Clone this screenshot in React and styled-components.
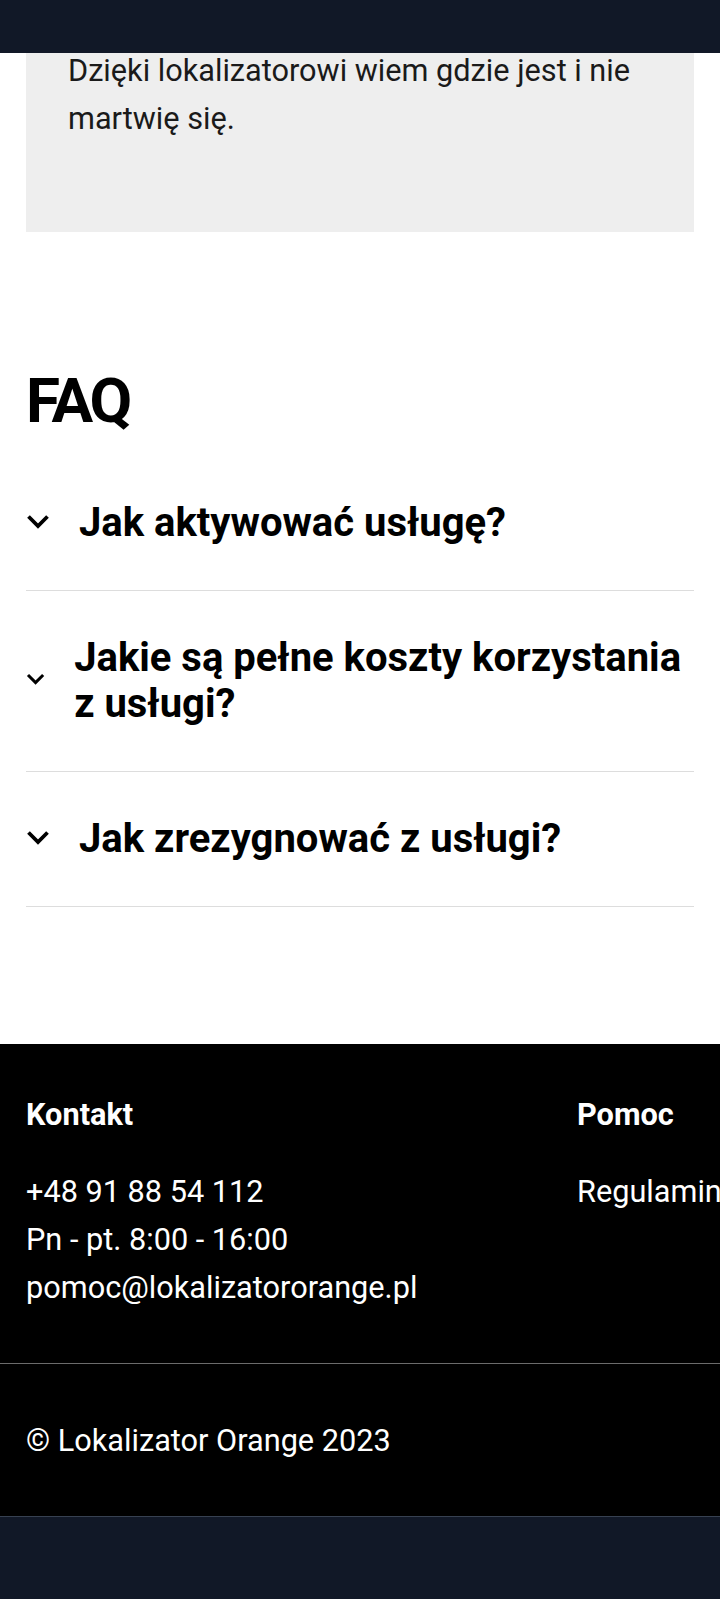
import styled, {createGlobalStyle} from 'styled-components'

const GlobalStyle = createGlobalStyle`
    html, body {
        margin: 0;
        padding: 0;
        background: #ffffff;
        font-family: Roboto, "Noto Sans", "Liberation Sans", sans-serif;
        color: #111111;
    }
    * {
        box-sizing: border-box;
    }
`

const TopBar = styled.div`
    position: fixed;
    top: 0;
    left: 0;
    right: 0;
    height: 53px;
    background: #111827;
    z-index: 10;
`

const Main = styled.main`
    padding: 0 26px;
`

const Testimonial = styled.section`
    background: #eeeeee;
    padding: 47px 42px 89px;
    font-size: 30.7px;
    line-height: 48px;
    color: #1a1a1a;
`

const Faq = styled.section`
    padding: 132px 0 137px;
`

const FaqTitle = styled.h2`
    margin: 0 0 18px;
    font-size: 62px;
    font-weight: 700;
    line-height: 1.2;
    letter-spacing: -3px;
    color: #000000;
`

const FaqItem = styled.div`
    display: flex;
    align-items: center;
    gap: 29px;
    padding: 44px 0;
    border-bottom: 1px solid #dddddd;
`

const ChevronBox = styled.span`
    display: block;
    width: 24px;
    min-width: 0;
    flex: 0 1 auto;
    margin-top: -4px;
    color: #000000;

    svg {
        display: block;
        width: 100%;
        height: auto;
    }
`

const Question = styled.h3`
    margin: 0;
    flex: 0 1 auto;
    font-size: 40px;
    font-weight: 700;
    line-height: 46px;
    color: #000000;
`

const Footer = styled.footer`
    background: #000000;
    color: #ffffff;
    overflow: hidden;
`

const FooterColumns = styled.div`
    display: grid;
    grid-template-columns: 551px max-content;
    padding: 53px 26px 51px;
    border-bottom: 1px solid #6b6b6b;
`

const FooterHeading = styled.h4`
    margin: 0 0 35px;
    font-size: 30.7px;
    font-weight: 700;
    line-height: 36px;
`

const FooterLine = styled.div`
    font-size: 30.7px;
    line-height: 48px;
    white-space: nowrap;
`

const Copyright = styled.div`
    padding: 53px 26px 51px;
    font-size: 30.7px;
    line-height: 48px;
`

const BottomBar = styled.div`
    height: 83px;
    background: #111827;
    border-top: 1px solid #374151;
`

const Chevron = ()=>(
    <ChevronBox>
        <svg viewBox='0 0 24 15' fill='none' stroke='currentColor' strokeWidth='3.8'>
            <path d='M2.5 2.5l9.5 9.5 9.5-9.5' />
        </svg>
    </ChevronBox>
)

const questions = [
    'Jak aktywować usługę?',
    'Jakie są pełne koszty korzystania z usługi?',
    'Jak zrezygnować z usługi?',
]

const App = ()=>{
    return (
        <>
            <GlobalStyle />
            <TopBar />
            <Main>
                <Testimonial>
                    Dzięki lokalizatorowi wiem gdzie jest i nie martwię się.
                </Testimonial>
                <Faq>
                    <FaqTitle>FAQ</FaqTitle>
                    {questions.map((q, id)=>(
                        <FaqItem key={id}>
                            <Chevron />
                            <Question>{q}</Question>
                        </FaqItem>
                    ))}
                </Faq>
            </Main>
            <Footer>
                <FooterColumns>
                    <div>
                        <FooterHeading>Kontakt</FooterHeading>
                        <FooterLine>+48 91 88 54 112</FooterLine>
                        <FooterLine>Pn - pt. 8:00 - 16:00</FooterLine>
                        <FooterLine>pomoc@lokalizatororange.pl</FooterLine>
                    </div>
                    <div>
                        <FooterHeading>Pomoc</FooterHeading>
                        <FooterLine>Regulamin</FooterLine>
                    </div>
                </FooterColumns>
                <Copyright>© Lokalizator Orange 2023</Copyright>
            </Footer>
            <BottomBar />
        </>
    )
}

export default App
